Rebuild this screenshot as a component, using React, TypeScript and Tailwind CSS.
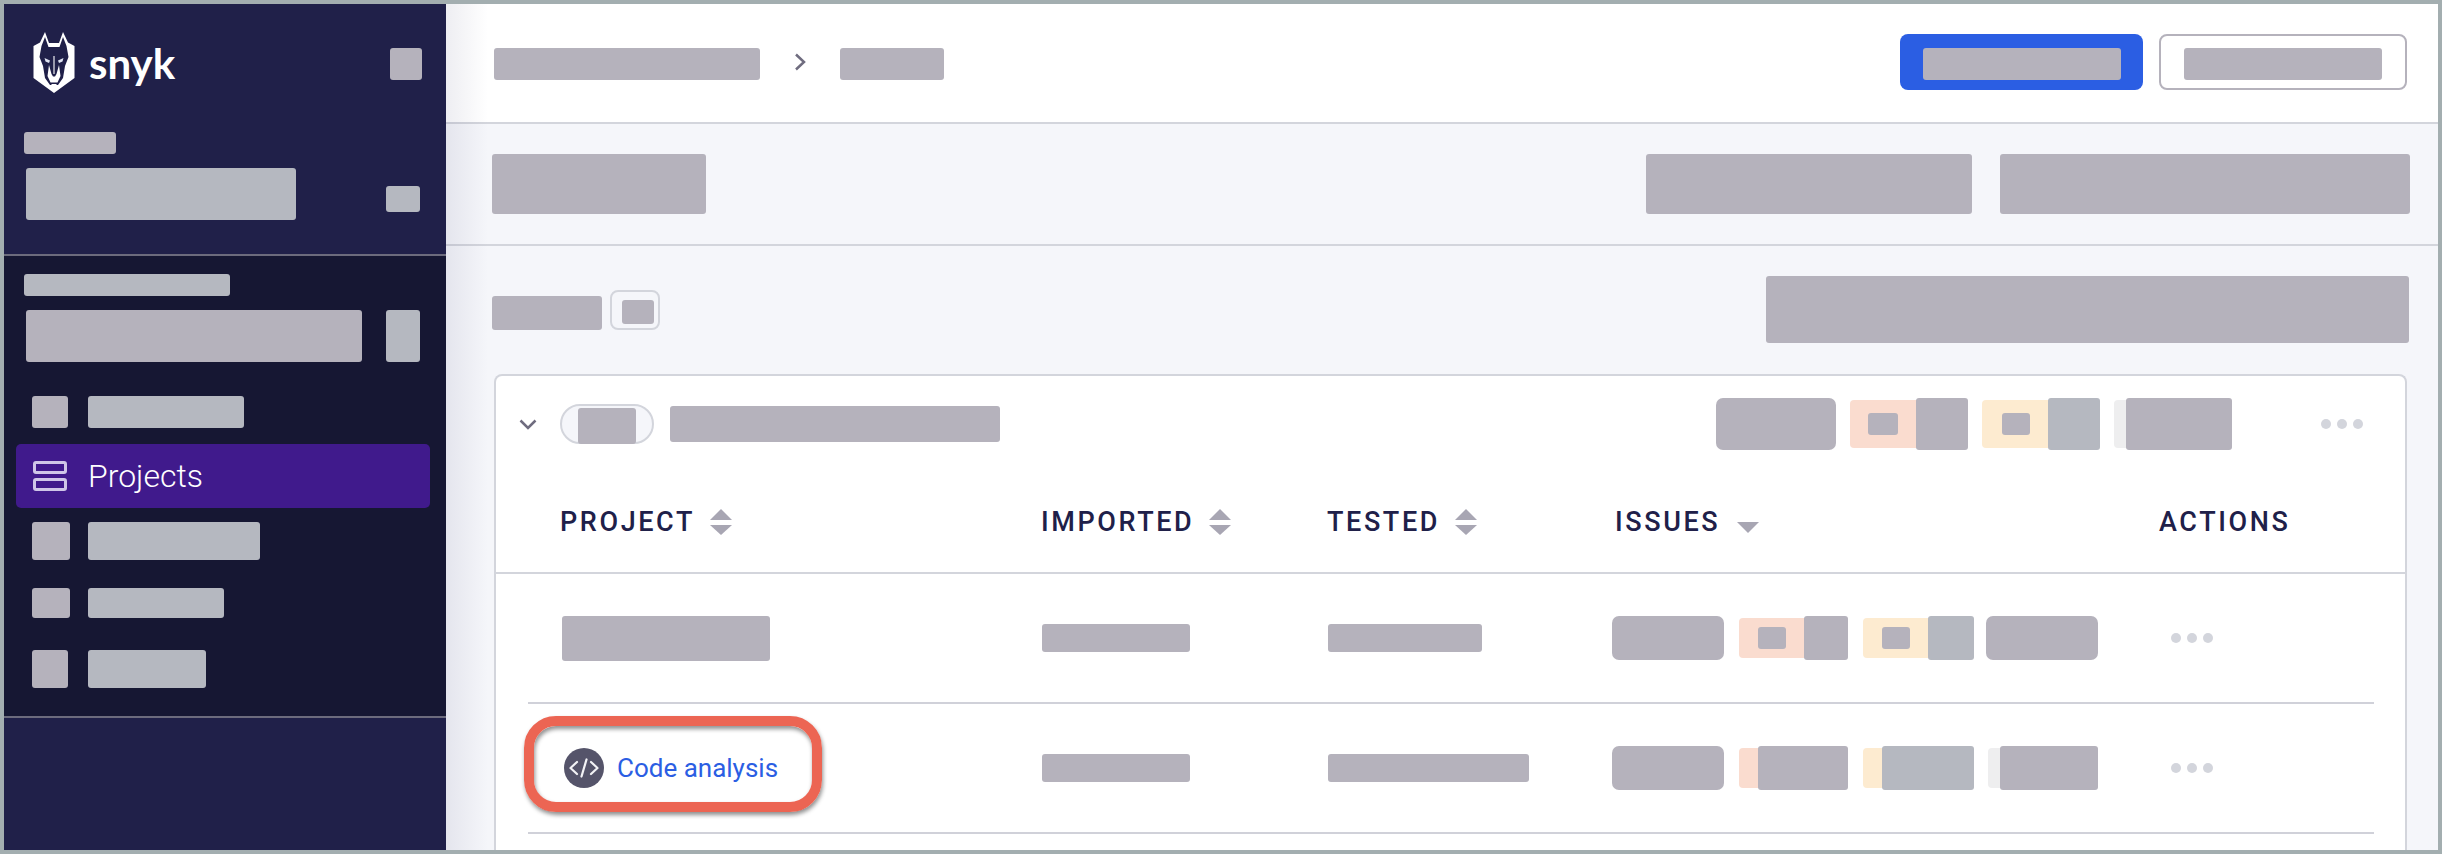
import type { ReactNode } from 'react';

const ROBOTO = "font-['Roboto',sans-serif]";

function Blob({ className }: { className: string }) {
    return <div className={`shrink-0 rounded-[3px] ${className}`} />;
}

function SnykMark() {
    return (
        <svg width="60" height="76" viewBox="0 0 60 76" className="shrink-0">
            <path d="M9.5 22 L16 18.5 L21 8 L25 19 H35 L39 8 L44 18.5 L50.500 22 V54 L30 69 L9.500 54 Z" fill="#ffffff" />
            <path
                d="M21 13 L24.500 23 H35.500 L39 13 L42.500 22 L44.500 33 L41 42 L39 54 L34 61 H26 L21 54 L19 42 L15.500 33 L17.500 22 Z"
                fill="#202049"
            />
            <path d="M25 41 L27.500 50 L29 52.500 H31 L32.500 50 L35 41 L36.500 52 L33.500 58.500 H26.500 L23.500 52 Z" fill="#ffffff" />
            <path d="M29 32 V50 H31 V32 Z" fill="#ffffff" opacity="0.55" />
            <path d="M20.500 34 L26 36.500 L25 39 L21.500 37.500 Z" fill="#dfe3f2" />
            <path d="M39.500 34 L34 36.500 L35 39 L38.500 37.500 Z" fill="#dfe3f2" />
            <path d="M27 60 H33 L30 63 Z" fill="#ffffff" />
        </svg>
    );
}

function ProjectsIcon() {
    return (
        <svg width="34" height="30" viewBox="0 0 34 30" fill="none" stroke="#cfc6e8" strokeWidth="3" className="shrink-0">
            <rect x="1.500" y="1.500" width="31" height="10" rx="1.500" />
            <rect x="1.500" y="18.500" width="31" height="10" rx="1.500" />
        </svg>
    );
}

function Sidebar() {
    return (
        <aside className="flex w-[442px] shrink-0 flex-col">
            <section className="box-border flex h-[252px] flex-col border-b-2 border-[#6c6b7d] bg-[#202049]">
                <div className="flex items-center pl-[20px] pt-[20px]">
                    <SnykMark />
                    <span className="ml-[5px] mt-[2px] font-['Lato',sans-serif] text-[42px] leading-[44px] font-bold text-white">snyk</span>
                    <Blob className="ml-auto mr-[24px] mt-[4px] h-[32px] w-[32px] bg-[#b5b2bc]" />
                </div>
                <Blob className="ml-[20px] mt-[32px] h-[22px] w-[92px] bg-[#b5b2bc]" />
                <div className="ml-[22px] mt-[14px] flex items-start">
                    <Blob className="h-[52px] w-[270px] bg-[#b5b8c0]" />
                    <Blob className="ml-[90px] mt-[18px] h-[26px] w-[34px] bg-[#b5b8c0]" />
                </div>
            </section>

            <section className="box-border flex h-[462px] flex-col border-b-2 border-[#6c6b7d] bg-[#161733]">
                <Blob className="ml-[20px] mt-[18px] h-[22px] w-[206px] bg-[#b5b8c0]" />
                <div className="ml-[22px] mt-[14px] flex">
                    <Blob className="h-[52px] w-[336px] bg-[#b5b2bc]" />
                    <Blob className="ml-[24px] h-[52px] w-[34px] bg-[#b5b8c0]" />
                </div>
                <div className="ml-[28px] mt-[34px] flex">
                    <Blob className="h-[32px] w-[36px] bg-[#b5b2bc]" />
                    <Blob className="ml-[20px] h-[32px] w-[156px] bg-[#b5b8c0]" />
                </div>
                <div className={`ml-[12px] mr-[16px] mt-[16px] flex h-[64px] items-center rounded-[5px] bg-[#401a8c] pl-[17px] ${ROBOTO}`}>
                    <ProjectsIcon />
                    <span className="ml-[21px] text-[32px] leading-none font-light text-white">Projects</span>
                </div>
                <div className="ml-[28px] mt-[14px] flex">
                    <Blob className="h-[38px] w-[38px] bg-[#b5b2bc]" />
                    <Blob className="ml-[18px] h-[38px] w-[172px] bg-[#b5b8c0]" />
                </div>
                <div className="ml-[28px] mt-[28px] flex">
                    <Blob className="h-[30px] w-[38px] bg-[#b5b2bc]" />
                    <Blob className="ml-[18px] h-[30px] w-[136px] bg-[#b5b8c0]" />
                </div>
                <div className="ml-[28px] mt-[32px] flex">
                    <Blob className="h-[38px] w-[36px] bg-[#b5b2bc]" />
                    <Blob className="ml-[20px] h-[38px] w-[118px] bg-[#b5b8c0]" />
                </div>
            </section>

            <section className="flex-1 bg-[#202049]" />
        </aside>
    );
}

function SortBoth() {
    return (
        <svg width="22" height="26" viewBox="0 0 22 26" fill="#a8a6b3" className="ml-[15px] shrink-0">
            <path d="M11 0 L22 11 H0 Z" />
            <path d="M0 16 H22 L11 26 Z" />
        </svg>
    );
}

function SortDown() {
    return (
        <svg width="22" height="11" viewBox="0 0 22 11" fill="#a8a6b3" className="ml-[17px] mt-[11px] shrink-0">
            <path d="M0 0 H22 L11 11 Z" />
        </svg>
    );
}

function Dots() {
    return (
        <div className="flex gap-[6px]">
            <div className="h-[10px] w-[10px] rounded-full bg-[#d3d5dc]" />
            <div className="h-[10px] w-[10px] rounded-full bg-[#d3d5dc]" />
            <div className="h-[10px] w-[10px] rounded-full bg-[#d3d5dc]" />
        </div>
    );
}

function HeadCell({ children }: { children: ReactNode }) {
    return (
        <div className="flex items-center text-[27px] leading-none font-medium tracking-[2.6px] text-[#202049]">{children}</div>
    );
}

function Chip({ className, children }: { className: string; children: ReactNode }) {
    return <div className={`flex shrink-0 items-center rounded-[4px] ${className}`}>{children}</div>;
}

function CodeIcon() {
    return (
        <svg width="40" height="40" viewBox="0 0 40 40" fill="none" stroke="#f2f2f5" strokeWidth="2.200" strokeLinecap="round" strokeLinejoin="round" className="shrink-0">
            <circle cx="20" cy="20" r="20" fill="#55546a" stroke="none" />
            <path d="M13 14 L6.500 20 L13 26" />
            <path d="M27 14 L33.500 20 L27 26" />
            <path d="M22.500 11.500 L17.500 28.500" />
        </svg>
    );
}

function Main() {
    return (
        <main className={`relative flex min-w-0 flex-1 flex-col bg-[#f5f6fa] ${ROBOTO}`}>
            <div className="pointer-events-none absolute inset-y-0 left-0 w-[42px] bg-linear-to-r from-[#23235a14] to-transparent" />

            <header className="box-border flex h-[120px] shrink-0 items-center border-b-2 border-[#d3d5dc] bg-white pl-[48px] pr-[31px]">
                <Blob className="mt-[2px] h-[32px] w-[266px] bg-[#b5b2bc]" />
                <svg width="12" height="18" viewBox="0 0 12 18" fill="none" stroke="#6f6c7f" strokeWidth="2.500" className="mb-[2px] ml-[34px] shrink-0">
                    <path d="M2 1.500 L10 9 L2 16.500" />
                </svg>
                <Blob className="ml-[34px] mt-[2px] h-[32px] w-[104px] bg-[#b5b2bc]" />
                <div className="mb-[2px] ml-auto flex h-[56px] w-[243px] items-center justify-center rounded-[8px] bg-[#2b5ee3]">
                    <Blob className="mt-[4px] h-[32px] w-[198px] bg-[#b5b2bc]" />
                </div>
                <div className="mb-[2px] ml-[16px] box-border flex h-[56px] w-[248px] items-center justify-center rounded-[8px] border-2 border-[#b5b2bc] bg-white">
                    <Blob className="mt-[4px] h-[32px] w-[198px] bg-[#b5b2bc]" />
                </div>
            </header>

            <div className="box-border flex h-[122px] shrink-0 items-center border-b-2 border-[#d3d5dc] pl-[46px] pr-[28px]">
                <Blob className="h-[60px] w-[214px] bg-[#b5b2bc]" />
                <Blob className="ml-auto h-[60px] w-[326px] bg-[#b5b2bc]" />
                <Blob className="ml-[28px] h-[60px] w-[410px] bg-[#b5b2bc]" />
            </div>

            <div className="flex shrink-0 items-center pl-[46px] pr-[29px] pt-[30px]">
                <Blob className="mt-[7px] h-[34px] w-[110px] bg-[#b5b2bc]" />
                <div className="ml-[8px] mt-[1px] box-border flex h-[40px] w-[50px] items-center rounded-[8px] border-2 border-[#d3d5dc] pl-[10px]">
                    <Blob className="mt-[4px] h-[24px] w-[32px] bg-[#b5b2bc]" />
                </div>
                <Blob className="ml-auto h-[67px] w-[643px] bg-[#b5b2bc]" />
            </div>

            <div className="ml-[48px] mr-[31px] mt-[31px] flex min-h-0 flex-1 flex-col rounded-t-[8px] border-2 border-b-0 border-[#d3d5dc] bg-white">
                <div className="flex h-[96px] shrink-0 items-center pl-[23px]">
                    <svg width="18" height="11" viewBox="0 0 18 11" fill="none" stroke="#6f6c7f" strokeWidth="2.500" className="shrink-0">
                        <path d="M1.500 1.500 L9 9 L16.500 1.500" />
                    </svg>
                    <div className="ml-[23px] box-border flex h-[40px] w-[94px] items-start justify-center rounded-full border-2 border-[#d3d5dc] bg-[#f5f6fa] pt-[2px]">
                        <Blob className="h-[36px] w-[58px] bg-[#b5b2bc]" />
                    </div>
                    <Blob className="ml-[16px] h-[36px] w-[330px] bg-[#b5b2bc]" />

                    <Blob className="ml-[716px] h-[52px] w-[120px] rounded-[7px] bg-[#b5b2bc]" />
                    <Chip className="ml-[14px] h-[48px] w-[118px] bg-[#fadccf] pl-[18px]">
                        <Blob className="h-[22px] w-[30px] bg-[#b5b2bc]" />
                        <Blob className="ml-auto h-[52px] w-[52px] bg-[#b5b2bc]" />
                    </Chip>
                    <Chip className="ml-[14px] h-[48px] w-[118px] bg-[#fdebd0] pl-[20px]">
                        <Blob className="h-[22px] w-[28px] bg-[#b5b2bc]" />
                        <Blob className="ml-auto h-[52px] w-[52px] bg-[#b5b8c0]" />
                    </Chip>
                    <Chip className="ml-[14px] h-[48px] w-[118px] bg-[#eeeeef]">
                        <Blob className="ml-auto h-[52px] w-[106px] bg-[#b5b2bc]" />
                    </Chip>
                    <div className="ml-[89px]">
                        <Dots />
                    </div>
                </div>

                <div className="box-border grid h-[102px] shrink-0 grid-cols-[481px_286px_284px_548px_1fr] items-center border-b-2 border-[#d3d5dc] pl-[64px]">
                    <HeadCell>
                        PROJECT
                        <SortBoth />
                    </HeadCell>
                    <HeadCell>
                        IMPORTED
                        <SortBoth />
                    </HeadCell>
                    <HeadCell>
                        TESTED
                        <SortBoth />
                    </HeadCell>
                    <div className="pl-[4px]">
                        <HeadCell>
                            ISSUES
                            <SortDown />
                        </HeadCell>
                    </div>
                    <HeadCell>ACTIONS</HeadCell>
                </div>

                <div className="ml-[32px] mr-[31px] box-border grid h-[130px] shrink-0 grid-cols-[514px_286px_284px_558px_1fr] items-center border-b-2 border-[#d0d1d9]">
                    <div className="pl-[34px]">
                        <Blob className="h-[45px] w-[208px] bg-[#b5b2bc]" />
                    </div>
                    <Blob className="h-[28px] w-[148px] bg-[#b5b2bc]" />
                    <Blob className="h-[28px] w-[154px] bg-[#b5b2bc]" />
                    <div className="flex items-center">
                        <Blob className="h-[44px] w-[112px] rounded-[7px] bg-[#b5b2bc]" />
                        <Chip className="ml-[15px] h-[40px] w-[109px] bg-[#fadccf] pl-[19px]">
                            <Blob className="h-[22px] w-[28px] bg-[#b5b2bc]" />
                            <Blob className="ml-auto h-[44px] w-[44px] bg-[#b5b2bc]" />
                        </Chip>
                        <Chip className="ml-[15px] h-[40px] w-[111px] bg-[#fdebd0] pl-[19px]">
                            <Blob className="h-[22px] w-[28px] bg-[#b5b2bc]" />
                            <Blob className="ml-auto h-[44px] w-[46px] bg-[#b5b8c0]" />
                        </Chip>
                        <Blob className="ml-[12px] h-[44px] w-[112px] rounded-[7px] bg-[#b5b2bc]" />
                    </div>
                    <div className="pl-[1px]">
                        <Dots />
                    </div>
                </div>

                <div className="ml-[32px] mr-[31px] box-border grid h-[130px] shrink-0 grid-cols-[514px_286px_284px_558px_1fr] items-center border-b-2 border-[#d0d1d9]">
                    <div className="relative flex h-full items-center pl-[36px]">
                        <div className="pointer-events-none absolute -left-[4px] top-[12px] box-border h-[96px] w-[298px] rounded-[32px] border-[10px] border-[#ec6553] shadow-[1px_3px_4px_#00000070,inset_1px_3px_4px_#00000070]" />
                        <CodeIcon />
                        <span className="ml-[13px] text-[26px] leading-none text-[#2b5ee3]">Code analysis</span>
                    </div>
                    <Blob className="h-[28px] w-[148px] bg-[#b5b2bc]" />
                    <Blob className="h-[28px] w-[201px] bg-[#b5b2bc]" />
                    <div className="flex items-center">
                        <Blob className="h-[44px] w-[112px] rounded-[7px] bg-[#b5b2bc]" />
                        <Chip className="ml-[15px] h-[40px] w-[109px] bg-[#fadccf]">
                            <Blob className="ml-auto h-[44px] w-[90px] bg-[#b5b2bc]" />
                        </Chip>
                        <Chip className="ml-[15px] h-[40px] w-[111px] bg-[#fdebd0]">
                            <Blob className="ml-auto h-[44px] w-[92px] bg-[#b5b8c0]" />
                        </Chip>
                        <Chip className="ml-[14px] h-[40px] w-[110px] bg-[#eeeeef]">
                            <Blob className="ml-auto h-[44px] w-[98px] bg-[#b5b2bc]" />
                        </Chip>
                    </div>
                    <div className="pl-[1px]">
                        <Dots />
                    </div>
                </div>
            </div>
        </main>
    );
}

export default function App() {
    return (
        <div className="box-border flex h-[854px] w-[2442px] overflow-hidden border-4 border-[#a3aeb0]">
            <Sidebar />
            <Main />
        </div>
    );
}
